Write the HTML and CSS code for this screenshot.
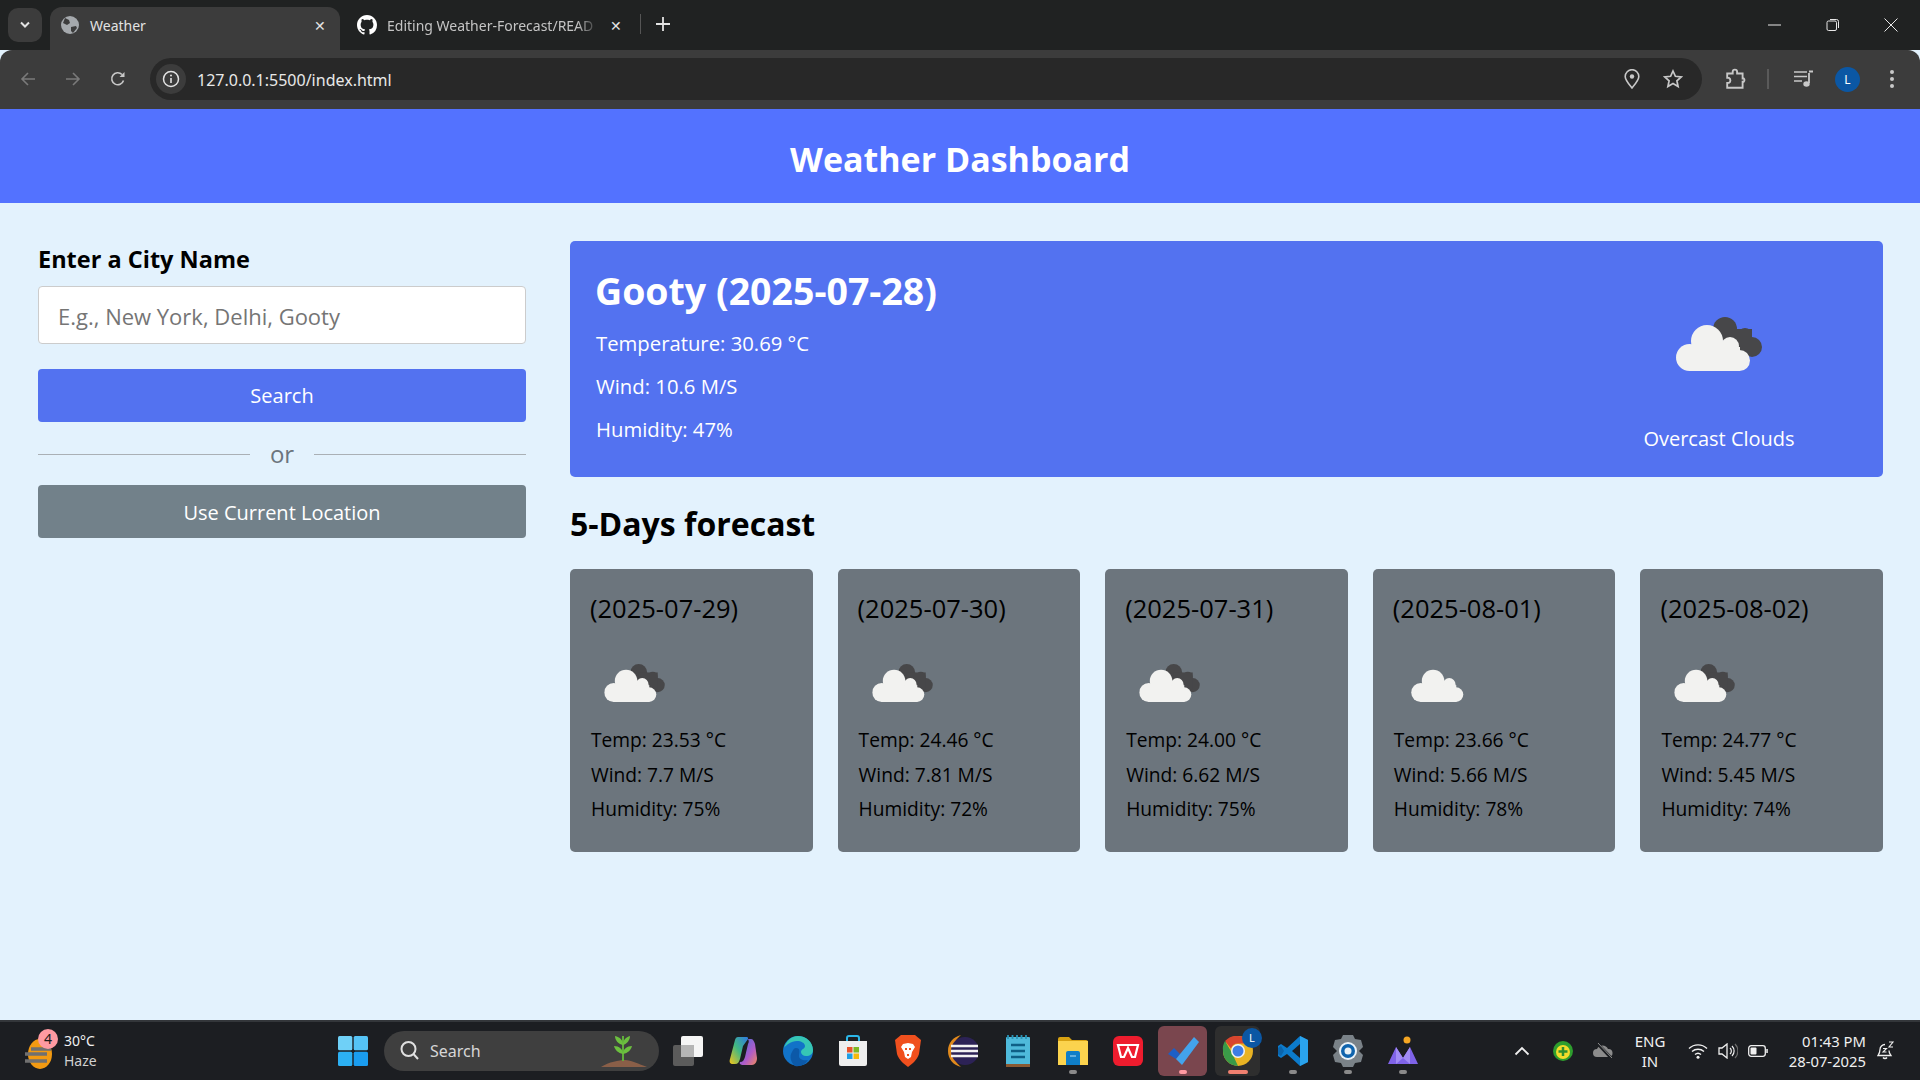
FILE: index.html
```html
<!DOCTYPE html>
<html lang="en">
  <head>
    <meta name="viewport" content="width=device-width, initial-scale=1.0">
    <title>Weather</title>
    <link rel="stylesheet" href="styles.css">
  </head>
  <body>
    <svg class="defs" width="0" height="0">
      <symbol id="cloudWhite" viewBox="0 0 86 54">
        <circle cx="31" cy="24" r="16" fill="#f2f2f0"/>
        <circle cx="54" cy="29" r="9" fill="#f2f2f0"/>
        <circle cx="13.5" cy="40.5" r="13.5" fill="#f2f2f0"/>
        <circle cx="63.5" cy="43.5" r="10.5" fill="#f2f2f0"/>
        <rect x="13" y="30" width="51" height="24" fill="#f2f2f0"/>
      </symbol>
      <symbol id="cloudDark" viewBox="0 0 86 54">
        <circle cx="49" cy="12" r="12" fill="#474749"/>
        <circle cx="69" cy="18" r="7" fill="#474749"/>
        <circle cx="76" cy="30" r="10" fill="#474749"/>
        <rect x="48" y="12" width="28" height="24" fill="#474749"/>
        <use href="#cloudWhite"/>
      </symbol>
    </svg>

    <div class="tabStrip">
      <div class="tabSearch">
        <svg width="12" height="8" viewBox="0 0 12 8"><path d="M2 1.5l4 4 4-4" fill="none" stroke="#e3e3e3" stroke-width="2"/></svg>
      </div>
      <div class="tab tabActive">
        <svg class="favicon" width="18" height="18" viewBox="0 0 18 18"><circle cx="9" cy="9" r="9" fill="#a5a9ad"/><path d="M4 2l4 2 1 3-3 2-4-2zM10 11l5-1 1 2-4 5-2-2z" fill="#3c3c3c"/></svg>
        <span class="tabTitle">Weather</span>
        <span class="tabClose">✕</span>
      </div>
      <div class="tab tabOther">
        <svg class="favicon" width="20" height="20" viewBox="0 0 16 16"><path fill="#fff" d="M8 0C3.58 0 0 3.58 0 8c0 3.54 2.29 6.53 5.47 7.59.4.07.55-.17.55-.38 0-.19-.01-.82-.01-1.49-2.01.37-2.53-.49-2.69-.94-.09-.23-.48-.94-.82-1.13-.28-.15-.68-.52-.01-.53.63-.01 1.08.58 1.23.82.72 1.21 1.87.87 2.33.66.07-.52.28-.87.51-1.07-1.78-.2-3.64-.89-3.64-3.95 0-.87.31-1.59.82-2.15-.08-.2-.36-1.02.08-2.12 0 0 .67-.21 2.2.82.64-.18 1.32-.27 2-.27s1.36.09 2 .27c1.53-1.04 2.2-.82 2.2-.82.44 1.1.16 1.92.08 2.12.51.56.82 1.27.82 2.15 0 3.07-1.87 3.75-3.65 3.95.29.25.54.73.54 1.48 0 1.07-.01 1.93-.01 2.2 0 .21.15.46.55.38A8.01 8.01 0 0 0 16 8c0-4.42-3.58-8-8-8z"/></svg>
        <span class="tabTitle tabFade">Editing Weather-Forecast/READ</span>
        <span class="tabClose">✕</span>
      </div>
      <div class="tabSep"></div>
      <div class="tabNew">
        <svg width="14" height="14" viewBox="0 0 14 14"><path d="M7 0v14M0 7h14" stroke="#e3e3e3" stroke-width="1.8"/></svg>
      </div>
      <div class="windowControls">
        <svg width="14" height="14" viewBox="0 0 14 14"><path d="M0 7h13" stroke="#e8e8e8" stroke-width="1"/></svg>
        <svg width="14" height="14" viewBox="0 0 14 14"><rect x="1" y="3" width="9.5" height="9.5" rx="1.5" fill="none" stroke="#e8e8e8"/><path d="M4 1.5h6.5a2 2 0 0 1 2 2V10" fill="none" stroke="#e8e8e8"/></svg>
        <svg width="14" height="14" viewBox="0 0 14 14"><path d="M.5.5l13 13M13.5.5l-13 13" stroke="#e8e8e8" stroke-width="1"/></svg>
      </div>
    </div>

    <div class="toolbar">
      <div class="navIcons">
        <svg width="16" height="16" viewBox="0 0 16 16"><path d="M15 8H2M8 2L2 8l6 6" fill="none" stroke="#7a7a7a" stroke-width="1.6"/></svg>
        <svg width="16" height="16" viewBox="0 0 16 16"><path d="M1 8h13M8 2l6 6-6 6" fill="none" stroke="#7a7a7a" stroke-width="1.6"/></svg>
        <svg width="16" height="16" viewBox="0 0 16 16"><path d="M13.5 9.5A6 6 0 1 1 12 3.5" fill="none" stroke="#c8c8c8" stroke-width="1.6"/><path d="M14.5 1v5h-5z" fill="#c8c8c8"/></svg>
      </div>
      <div class="omnibox">
        <div class="siteInfo">
          <svg width="18" height="18" viewBox="0 0 18 18"><circle cx="9" cy="9" r="7.5" fill="none" stroke="#e3e3e3" stroke-width="1.5"/><path d="M9 8v5" stroke="#e3e3e3" stroke-width="1.6"/><circle cx="9" cy="5.5" r="1" fill="#e3e3e3"/></svg>
        </div>
        <span class="url">127.0.0.1:5500/index.html</span>
        <svg class="pinIcon" width="16" height="20" viewBox="0 0 16 20"><path d="M8 19C4 14 1.2 11 1.2 7.5a6.8 6.8 0 0 1 13.6 0C14.8 11 12 14 8 19z" fill="none" stroke="#c8c8c8" stroke-width="1.6"/><circle cx="8" cy="7.5" r="2.2" fill="#c8c8c8"/></svg>
        <svg class="starIcon" width="20" height="20" viewBox="0 0 20 20"><path d="M10 2l2.4 5.3 5.8.6-4.3 3.9 1.2 5.7L10 14.6l-5.1 2.9 1.2-5.7L1.8 7.9l5.8-.6z" fill="none" stroke="#c8c8c8" stroke-width="1.7"/></svg>
      </div>
      <div class="toolIcons">
        <svg width="22" height="22" viewBox="0 0 20 20"><path d="M2 5h5V3.5a2 2 0 0 1 4 0V5h5v4.500h1a2 2 0 0 1 0 3h-1V18H2v-4.500h1.500a2.500 2.500 0 0 0 0-4.500H2z" fill="none" stroke="#c8c8c8" stroke-width="1.7"/></svg>
        <div class="toolSep"></div>
        <svg width="20" height="18" viewBox="0 0 20 18"><path d="M0 2h13M0 6.5h13M0 11h8" stroke="#c8c8c8" stroke-width="1.7"/><path d="M15 3v10" stroke="#c8c8c8" stroke-width="1.8"/><path d="M15 1.5h4" stroke="#c8c8c8" stroke-width="2"/><ellipse cx="12.5" cy="14" rx="3.2" ry="2.8" fill="#c8c8c8"/></svg>
        <div class="avatar">L</div>
        <svg width="6" height="20" viewBox="0 0 6 20"><circle cx="3" cy="3" r="2" fill="#c8c8c8"/><circle cx="3" cy="10" r="2" fill="#c8c8c8"/><circle cx="3" cy="17" r="2" fill="#c8c8c8"/></svg>
      </div>
    </div>

    <div class="page">
      <header class="pageHeader">
        <h1>Weather Dashboard</h1>
      </header>
      <main class="content">
        <section class="sidebar">
          <h3 class="cityLabel">Enter a City Name</h3>
          <input class="cityInput" type="text" placeholder="E.g., New York, Delhi, Gooty">
          <button class="btn btnSearch">Search</button>
          <div class="divider"><span>or</span></div>
          <button class="btn btnLocation">Use Current Location</button>
        </section>
        <section class="results">
          <div class="currentCard">
            <div class="currentInfo">
              <h2>Gooty (2025-07-28)</h2>
              <p>Temperature: 30.69 °C</p>
              <p>Wind: 10.6 M/S</p>
              <p>Humidity: 47%</p>
            </div>
            <div class="currentIcon">
              <svg width="86" height="54"><use href="#cloudDark"/></svg>
              <p>Overcast Clouds</p>
            </div>
          </div>
          <h2 class="forecastTitle">5-Days forecast</h2>
          <div class="forecastGrid">
            <div class="dayCard">
              <h3>(2025-07-29)</h3>
              <svg class="dayIcon" width="61" height="38"><use href="#cloudDark"/></svg>
              <p>Temp: 23.53 °C</p>
              <p>Wind: 7.7 M/S</p>
              <p>Humidity: 75%</p>
            </div>
            <div class="dayCard">
              <h3>(2025-07-30)</h3>
              <svg class="dayIcon" width="61" height="38"><use href="#cloudDark"/></svg>
              <p>Temp: 24.46 °C</p>
              <p>Wind: 7.81 M/S</p>
              <p>Humidity: 72%</p>
            </div>
            <div class="dayCard">
              <h3>(2025-07-31)</h3>
              <svg class="dayIcon" width="61" height="38"><use href="#cloudDark"/></svg>
              <p>Temp: 24.00 °C</p>
              <p>Wind: 6.62 M/S</p>
              <p>Humidity: 75%</p>
            </div>
            <div class="dayCard">
              <h3>(2025-08-01)</h3>
              <svg class="dayIcon dayIconClear" width="61" height="38"><use href="#cloudWhite"/></svg>
              <p>Temp: 23.66 °C</p>
              <p>Wind: 5.66 M/S</p>
              <p>Humidity: 78%</p>
            </div>
            <div class="dayCard">
              <h3>(2025-08-02)</h3>
              <svg class="dayIcon" width="61" height="38"><use href="#cloudDark"/></svg>
              <p>Temp: 24.77 °C</p>
              <p>Wind: 5.45 M/S</p>
              <p>Humidity: 74%</p>
            </div>
          </div>
        </section>
      </main>
    </div>

    <footer class="taskbar">
      <div class="widget">
        <div class="widgetIcon">
          <svg width="32" height="34" viewBox="0 0 32 34">
            <ellipse cx="17" cy="18" rx="12" ry="15" fill="#f29a12"/>
            <path d="M2 18h22M8 13h20M2 25h22" stroke="#707070" stroke-width="3.5"/>
          </svg>
          <span class="widgetBadge">4</span>
        </div>
        <div class="widgetText">
          <span>30°C</span>
          <span class="widgetSub">Haze</span>
        </div>
      </div>

      <div class="taskCell">
        <svg width="30" height="30" viewBox="0 0 30 30">
          <rect width="14.3" height="14.3" rx="1.5" fill="#6fd0f7"/>
          <rect x="15.7" width="14.3" height="14.3" rx="1.5" fill="#55c3f5"/>
          <rect y="15.7" width="14.3" height="14.3" rx="1.5" fill="#2cb0f3"/>
          <rect x="15.7" y="15.7" width="14.3" height="14.3" rx="1.5" fill="#1a9df0"/>
        </svg>
      </div>
      <div class="taskSearch">
        <svg width="20" height="22" viewBox="0 0 20 22"><circle cx="8.5" cy="9" r="7" fill="none" stroke="#e0e0e0" stroke-width="2"/><path d="M13.5 14l4.5 5" stroke="#e0e0e0" stroke-width="2"/></svg>
        <span>Search</span>
        <svg class="plant" width="46" height="36" viewBox="0 0 46 36">
          <path d="M0 34c8-5 18-7 24-7s14 4 22 7z" fill="#8a5f48"/>
          <path d="M22 28V3" stroke="#5fae3a" stroke-width="2"/>
          <path d="M22 12C17 11 14 7 14 3c5 1 8 4 8 9zM22 12c4-1 7-5 7-9-4 1-7 4-7 9zM22 21c-5-1-8-4-9-8 5 0 9 3 9 8zM22 21c5-1 8-4 9-8-5 0-9 3-9 8z" fill="#6cbf3f"/>
        </svg>
      </div>

      <div class="taskCell">
        <svg width="30" height="30" viewBox="0 0 30 30"><rect y="9" width="21" height="21" rx="2" fill="#5b5b5b"/><rect x="8" width="22" height="21" rx="2" fill="#f5f5f5"/><rect x="8" y="9" width="13" height="12" fill="#b5b5b5"/></svg>
      </div>
      <div class="taskCell">
        <svg width="30" height="30" viewBox="0 0 30 30"><defs><linearGradient id="copilotA" x1="0" y1="1" x2="1" y2="0"><stop offset="0" stop-color="#f5c518"/><stop offset=".5" stop-color="#41b883"/><stop offset="1" stop-color="#2f7ae5"/></linearGradient><linearGradient id="copilotB" x1="0" y1="0" x2="1" y2="1"><stop offset="0" stop-color="#3d6fe0"/><stop offset=".6" stop-color="#b05cc8"/><stop offset="1" stop-color="#f08a5d"/></linearGradient></defs><path d="M10 1h9c1 0 1 1 1 2l-5 7-3 13c-1 3-2 5-5 5H5C2 28 1 26 2 23L7 4c.5-2 1.5-3 3-3z" fill="url(#copilotA)"/><path d="M20 3h3c2 0 3 2 4 5l2 14c0 4-2 7-5 7H15c-2 0-4-1-3-3 3 0 4-2 5-5l3-13c1-2 1-3 0-5z" fill="url(#copilotB)"/></svg>
      </div>
      <div class="taskCell">
        <svg width="30" height="32" viewBox="0 0 30 32"><circle cx="15" cy="16" r="15" fill="#1273c8"/><path d="M15 1c8 0 15 6 15 14 0 4-3 6-7 6-3 0-5-2-5-4 0-3 4-3 4-6 0-3-4-5-8-5C8 6 3 10 1 13 3 6 8 1 15 1z" fill="#36c6b5"/><path d="M13 13c5 0 3 5 3 8 0 3 4 5 9 4-3 5-8 7-13 6 -4-3-6-10-3-14 1-2 2-4 4-4z" fill="#0c59a8"/></svg>
      </div>
      <div class="taskCell">
        <svg width="30" height="32" viewBox="0 0 30 32"><path d="M9 8V3a2 2 0 0 1 2-2h8a2 2 0 0 1 2 2v5" fill="none" stroke="#2bb6e8" stroke-width="2"/><path d="M1 6h28v23a2 2 0 0 1-2 2H3a2 2 0 0 1-2-2z" fill="#eeeeee"/><rect x="9" y="12" width="5.5" height="5.5" fill="#e8532b"/><rect x="15.5" y="12" width="5.5" height="5.5" fill="#7db824"/><rect x="9" y="18.5" width="5.5" height="5.5" fill="#1f9fe6"/><rect x="15.5" y="18.5" width="5.5" height="5.5" fill="#f5b90d"/></svg>
      </div>
      <div class="taskCell">
        <svg width="26" height="32" viewBox="0 0 26 32"><path d="M6 0h14l6 5-2 14c-2 6-7 10-11 13C9 29 4 25 2 19L0 5z" fill="#f0501e"/><path d="M8 9l5-1 5 1 2 3-3 5-1 5-3 2-3-2-1-5-3-5z" fill="#fff"/><path d="M10 13h2v2h-2zM14 13h2v2h-2zM12 19h2v2h-2z" fill="#f0501e"/></svg>
      </div>
      <div class="taskCell">
        <svg width="30" height="32" viewBox="0 0 30 32"><path d="M13 0C5 2 0 8 0 16s5 14 13 16C7 27 5 22 5 16S7 5 13 0z" fill="#e18a1d"/><circle cx="17" cy="16" r="14" fill="#2c2256"/><path d="M3 11h28M3 16h28M3 21h28" stroke="#f2f2f2" stroke-width="2.5"/></svg>
      </div>
      <div class="taskCell">
        <svg width="24" height="32" viewBox="0 0 24 32"><rect y="2" width="24" height="28" rx="1" fill="#4fbadb"/><path d="M2 0v4M6.5 0v4M11 0v4M15.5 0v4M20 0v4" stroke="#2a93b5" stroke-width="1.8"/><path d="M5 10h14M5 16h14M5 22h14" stroke="#0f5f86" stroke-width="2.4"/><rect y="29" width="24" height="3" fill="#8a5a32"/></svg>
      </div>
      <div class="taskCell">
        <svg width="30" height="28" viewBox="0 0 30 28"><path d="M0 2a2 2 0 0 1 2-2h9l3 3h14a2 2 0 0 1 2 2v4H0z" fill="#d8a212"/><path d="M0 4h30v24H0z" fill="#fbd34e"/><path d="M8 16a2 2 0 0 1 2-2h10a2 2 0 0 1 2 2v12H8z" fill="#0f7ec8"/><path d="M12 19h6" stroke="#b8e0f5" stroke-width="1"/></svg>
        <span class="runDot"></span>
      </div>
      <div class="taskCell">
        <svg width="30" height="30" viewBox="0 0 30 30"><rect width="30" height="30" rx="6" fill="#ee1c2e"/><path d="M5 9h20l-3 12h-3l-4-9-4 9H8z" fill="none" stroke="#fff" stroke-width="2.2"/></svg>
      </div>
      <div class="taskCell taskHighlight">
        <svg width="32" height="28" viewBox="0 0 32 28"><path d="M1 17l6-6 6 6-4 5z" fill="#1c5fc6"/><path d="M9 22L27 0l5 5-17 23z" fill="#43a3ec"/></svg>
        <span class="runDot runPink"></span>
      </div>
      <div class="taskCell taskOpen">
        <svg width="32" height="32" viewBox="0 0 32 32"><circle cx="16" cy="16" r="15" fill="#e9b323"/><path d="M16 1a15 15 0 0 1 13 7.5H16a7.5 7.5 0 0 0-7 5L3 6a15 15 0 0 1 13-5z" fill="#d8452e"/><path d="M1 16A15 15 0 0 1 3 6l7 12 6 13A15 15 0 0 1 1 16z" fill="#3a9a48"/><circle cx="16" cy="16" r="7" fill="#f3f3f3"/><circle cx="16" cy="16" r="5.5" fill="#3d7de6"/></svg>
        <span class="chromeBadge">L</span>
        <span class="runDot runWide"></span>
      </div>
      <div class="taskCell">
        <svg width="30" height="30" viewBox="0 0 30 30"><path d="M22 0l8 4v22l-8 4-13-12-6 4-3-2v-10l3-2 6 4z" fill="#0c7bcc"/><path d="M22 8l-8 7 8 7z" fill="#1c1e22"/><path d="M22 0l8 4v22l-8 4z" fill="#2aa3ed"/><path d="M3 10l3 5-3 5-3-2v-6z" fill="#0b64ab"/></svg>
        <span class="runDot"></span>
      </div>
      <div class="taskCell">
        <svg width="30" height="32" viewBox="0 0 30 32"><path d="M10 0h10l2 4 6 1 2 7-4 4 4 4-2 7-6 1-2 4H10l-2-4-6-1-2-7 4-4-4-4 2-7 6-1z" fill="#7a8288"/><circle cx="15" cy="16" r="9" fill="#eaf2f8"/><circle cx="15" cy="16" r="7" fill="#1064ad"/><circle cx="15" cy="16" r="3.5" fill="#e8f0f5"/></svg>
        <span class="runDot"></span>
      </div>
      <div class="taskCell">
        <svg width="30" height="30" viewBox="0 0 30 30"><circle cx="19" cy="4" r="3.5" fill="#f5a623"/><path d="M0 28L8 11l7 11 7-11 8 17z" fill="#7f63e8"/><path d="M8 11l7 11-7 6zM22 11l-7 11 7 6z" fill="#a18cf5"/></svg>
        <span class="runDot"></span>
      </div>

      <div class="tray">
        <svg class="trayChevron" width="16" height="10" viewBox="0 0 16 10"><path d="M1.5 8.5L8 2l6.5 6.5" fill="none" stroke="#f0f0f0" stroke-width="1.8"/></svg>
        <svg class="trayGreen" width="20" height="20" viewBox="0 0 20 20"><circle cx="10" cy="10" r="10" fill="#2e9e2e"/><circle cx="10" cy="11" r="7" fill="#f2dc2b"/><path d="M10 6v9M5.5 10.5h9" stroke="#2e8e2e" stroke-width="2.5"/></svg>
        <svg class="trayCloud" width="20" height="16" viewBox="0 0 20 16"><path d="M4 14a4 4 0 0 1 0-8 6 6 0 0 1 11 0 4 4 0 0 1 1 8z" fill="#8c8c8c"/><path d="M4 0l15 16" stroke="#1c1e22" stroke-width="3"/><path d="M5 0l14 15" stroke="#8c8c8c" stroke-width="1"/></svg>
        <div class="trayLang"><span>ENG</span><span>IN</span></div>
        <svg class="trayWifi" width="20" height="16" viewBox="0 0 20 16"><path d="M1 5.5a13 13 0 0 1 18 0M4 8.5a9 9 0 0 1 12 0M7 11.5a4.5 4.5 0 0 1 6 0" fill="none" stroke="#f0f0f0" stroke-width="1.4"/><circle cx="10" cy="14.2" r="1.5" fill="#f0f0f0"/></svg>
        <svg class="traySound" width="20" height="16" viewBox="0 0 20 16"><path d="M1 5h3l5-4v14l-5-4H1z" fill="none" stroke="#f0f0f0" stroke-width="1.3"/><path d="M12 5a4 4 0 0 1 0 6M14 3a7 7 0 0 1 0 10" fill="none" stroke="#f0f0f0" stroke-width="1.2"/><path d="M17 1a10 10 0 0 1 0 14" fill="none" stroke="#6c6c6c" stroke-width="1.2"/></svg>
        <svg class="trayBattery" width="20" height="12" viewBox="0 0 20 12"><rect x=".7" y=".7" width="16.6" height="10.6" rx="2.5" fill="none" stroke="#f0f0f0" stroke-width="1.3"/><rect x="2.5" y="2.5" width="6" height="7" rx="1" fill="#f0f0f0"/><rect x="18.3" y="4" width="1.5" height="4" fill="#f0f0f0"/></svg>
        <div class="trayClock"><span>01:43 PM</span><span>28-07-2025</span></div>
        <svg class="trayBell" width="18" height="20" viewBox="0 0 18 20"><path d="M8 3.5a5 5 0 0 0-5 5c0 3-1 4.5-2 6h13c-1-1.500-2-2.500-2-5" fill="none" stroke="#f0f0f0" stroke-width="1.3"/><path d="M6 16.5a2.5 2.5 0 0 0 4 0" fill="none" stroke="#f0f0f0" stroke-width="1.3"/><path d="M6 7.5h3.5L6 11h3.5M12 1h4l-4 5h4" fill="none" stroke="#f0f0f0" stroke-width="1.1"/></svg>
      </div>
    </footer>
  </body>
</html>
```

FILE: styles.css
```css
*{
  box-sizing: border-box;
}
html, body{
  margin: 0;
  height: 1080px;
  overflow: hidden;
}
body{
  display: flex;
  flex-direction: column;
  font-family: "Open Sans", sans-serif;
  background-color: #e3f2fd;
}
.defs{
  position: absolute;
}

/* browser tabs */
.tabStrip{
  display: flex;
  align-items: flex-end;
  height: 50px;
  background-color: #202222;
  font-family: "Noto Sans", sans-serif;
  color: #e3e3e3;
  font-size: 14px;
  flex-shrink: 0;
}
.tabSearch{
  display: flex;
  justify-content: center;
  align-items: center;
  width: 34px;
  height: 34px;
  margin: 0 8px 8px 8px;
  background-color: #3c3c3c;
  border-radius: 10px;
}
.tab{
  display: flex;
  align-items: center;
  width: 296px;
  height: 43px;
  padding: 0 14px 7px 15px;
  border-radius: 12px 12px 0 0;
}
.tabActive{
  width: 290px;
  background-color: #3c3c3c;
  padding-left: 11px;
}
.tabOther{
  padding-left: 17px;
}
.tabOther .favicon{
  margin-right: 10px;
}
.favicon{
  flex-shrink: 0;
  margin-right: 11px;
}
.tabTitle{
  flex: 1;
  white-space: nowrap;
}
.tabFade{
  color: #c4c4c4;
  mask-image: linear-gradient(to right, #000 190px, transparent 212px);
}
.tabClose{
  font-size: 14px;
  margin-left: 12px;
}
.tabSep{
  width: 1px;
  height: 20px;
  margin: 0 0 16px 4px;
  background-color: #555;
}
.tabNew{
  display: flex;
  width: 14px;
  margin: 0 0 19px 15px;
}
.windowControls{
  display: flex;
  align-items: center;
  gap: 44px;
  margin-left: auto;
  margin-right: 22px;
  margin-bottom: 18px;
}

/* browser toolbar */
.toolbar{
  display: flex;
  align-items: center;
  height: 59px;
  padding-bottom: 1px;
  background-color: #3c3c3c;
  border-radius: 12px 12px 0 0;
  flex-shrink: 0;
}
.navIcons{
  display: flex;
  align-items: center;
  gap: 29px;
  width: 150px;
  padding-left: 20px;
}
.omnibox{
  display: flex;
  align-items: center;
  width: 1552px;
  height: 42px;
  background-color: #282828;
  border-radius: 21px;
  padding-left: 6px;
  font-family: "Noto Sans", sans-serif;
  color: #e8e8e8;
}
.siteInfo{
  display: flex;
  justify-content: center;
  align-items: center;
  width: 30px;
  height: 30px;
  border-radius: 50%;
  background-color: #3c3c3c;
}
.url{
  flex: 1;
  margin-left: 11px;
  padding-top: 2px;
  font-size: 16px;
}
.pinIcon{
  margin-right: 23px;
}
.starIcon{
  margin-right: 19px;
}
.toolIcons{
  display: flex;
  align-items: center;
  flex: 1;
  padding-left: 23px;
}
.toolSep{
  width: 2px;
  height: 20px;
  margin: 0 25px 0 20px;
  background-color: #5a5a5a;
}
.avatar{
  display: flex;
  justify-content: center;
  align-items: center;
  width: 25px;
  height: 25px;
  margin: 0 29px 0 21px;
  border-radius: 50%;
  background-color: #0b57a4;
  color: #fff;
  font-family: "Noto Sans", sans-serif;
  font-size: 12px;
}

/* weather page */
.page{
  flex: 1;
  display: flex;
  flex-direction: column;
  background-color: #e3f2fd;
}
.pageHeader{
  display: flex;
  justify-content: center;
  align-items: center;
  height: 94px;
  padding-top: 5px;
  background-color: #5372ff;
}
.pageHeader h1{
  margin: 0;
  color: #fff;
  font-size: 34px;
  font-weight: 700;
}
.content{
  display: flex;
  gap: 44px;
  padding: 38px 37px 0 38px;
}
.sidebar{
  display: flex;
  flex-direction: column;
  width: 488px;
  flex-shrink: 0;
}
.cityLabel{
  margin: 2px 0 11px 0;
  font-size: 23.5px;
  line-height: 32px;
  font-weight: 700;
  color: #000;
}
.cityInput{
  width: 100%;
  height: 58px;
  padding: 2px 19px 0 19px;
  background-color: #fff;
  border: 1px solid #ccc;
  border-radius: 4px;
  font-family: inherit;
  font-size: 22px;
}
.cityInput::placeholder{
  color: #757575;
}
.btn{
  width: 100%;
  height: 53px;
  border: none;
  border-radius: 4px;
  color: #fff;
  font-family: inherit;
  font-size: 20px;
}
.btnSearch{
  margin-top: 25px;
  background-color: #5372f0;
}
.btnLocation{
  padding-top: 2px;
  background-color: #72818a;
}
.divider{
  display: flex;
  align-items: center;
  gap: 20px;
  height: 63px;
  color: #6c757d;
  font-size: 24px;
}
.divider::before, .divider::after{
  content: "";
  flex: 1;
  height: 1px;
  background-color: #aab0b5;
  margin-top: 2px;
}
.results{
  flex: 1;
  min-width: 0;
}
.currentCard{
  display: flex;
  justify-content: space-between;
  height: 236px;
  padding: 26px 88px 0 25px;
  background-color: #5372f0;
  border-radius: 5px;
  color: #fff;
}
.currentInfo h2{
  margin: 0 0 15px 0;
  font-size: 37.5px;
  line-height: 48px;
  font-weight: 700;
}
.currentInfo p{
  margin: 0 0 17px 1px;
  font-size: 20.3px;
  line-height: 26px;
}
.currentIcon{
  display: flex;
  flex-direction: column;
  align-items: center;
  width: 152px;
  padding-top: 50px;
}
.currentIcon p{
  margin: 55px 0 0 0;
  font-size: 20px;
  line-height: 26px;
  white-space: nowrap;
}
.forecastTitle{
  margin: 26px 0 24px 0;
  font-size: 32px;
  line-height: 42px;
  font-weight: 700;
  color: #000;
}
.forecastGrid{
  display: grid;
  grid-template-columns: repeat(5, 1fr);
  gap: 25px;
}
.dayCard{
  height: 283px;
  padding: 24px 20px 0 20px;
  background-color: #6c757d;
  border-radius: 5px;
  color: #000;
}
.dayCard h3{
  margin: 0 0 41px 0;
  font-size: 25.5px;
  line-height: 30px;
  font-weight: 500;
}
.dayIcon{
  display: block;
  margin: 0 0 25px 14px;
}
.dayIconClear{
  margin-left: 18px;
}
.dayCard p{
  margin: 0 0 8px 1px;
  font-size: 19.2px;
  line-height: 26.5px;
}

/* windows taskbar */
.taskbar{
  display: flex;
  align-items: center;
  height: 60px;
  flex-shrink: 0;
  background-color: #1c1e22;
  border-top: 2px solid #33363a;
  color: #f0f0f0;
  font-family: "Noto Sans", sans-serif;
}
.widget{
  display: flex;
  align-items: center;
  width: 325px;
  padding-left: 23px;
  flex-shrink: 0;
}
.widgetIcon{
  position: relative;
  width: 41px;
  height: 34px;
  margin-top: 4px;
}
.widgetBadge{
  position: absolute;
  top: -7px;
  left: 15px;
  width: 20px;
  height: 20px;
  border-radius: 50%;
  background-color: #ff9aa2;
  color: #1a1a1a;
  font-size: 14px;
  line-height: 20px;
  text-align: center;
}
.widgetText{
  display: flex;
  flex-direction: column;
  font-size: 14px;
  line-height: 20px;
}
.widgetSub{
  color: #d0d0d0;
}
.taskCell{
  position: relative;
  display: flex;
  justify-content: center;
  align-items: center;
  width: 55px;
  height: 50px;
  flex-shrink: 0;
}
.taskCell svg{
  position: relative;
}
.taskHighlight::before, .taskOpen::before{
  content: "";
  position: absolute;
  top: 0;
  bottom: 0;
  border-radius: 6px;
}
.taskHighlight::before{
  left: 3px;
  right: 3px;
  background-color: #7a464e;
}
.taskOpen::before{
  left: 5px;
  right: 5px;
  background-color: #2e2e2e;
}
.taskSearch{
  display: flex;
  align-items: center;
  width: 275px;
  height: 40px;
  margin: 0 1px 0 4px;
  padding: 0 16px;
  background-color: #3f3f3f;
  border-radius: 20px;
  font-size: 16px;
  color: #d6d6d6;
  flex-shrink: 0;
}
.taskSearch span{
  flex: 1;
  margin-left: 10px;
}
.plant{
  margin-right: -4px;
}
.runDot{
  position: absolute;
  bottom: 2px;
  left: 50%;
  width: 8px;
  height: 4px;
  margin-left: -4px;
  border-radius: 2px;
  background-color: #8a8a8a;
}
.runPink{
  background-color: #ff9aa2;
}
.runWide{
  width: 20px;
  margin-left: -10px;
  background-color: #f08070;
}
.chromeBadge{
  position: absolute;
  top: 2px;
  right: 3px;
  width: 20px;
  height: 20px;
  border-radius: 50%;
  background-color: #0b57a4;
  color: #fff;
  font-size: 11px;
  line-height: 20px;
  text-align: center;
}
.tray{
  display: flex;
  align-items: center;
  margin-left: auto;
  padding-right: 25px;
}
.trayGreen{
  margin-left: 23px;
}
.trayCloud{
  margin-left: 20px;
}
.trayLang{
  display: flex;
  flex-direction: column;
  align-items: center;
  width: 36px;
  margin-left: 19px;
  font-size: 15px;
  line-height: 20px;
}
.trayWifi{
  margin-left: 20px;
}
.traySound{
  margin-left: 10px;
}
.trayBattery{
  margin-left: 10px;
}
.trayClock{
  display: flex;
  flex-direction: column;
  align-items: flex-end;
  width: 98px;
  font-size: 14.8px;
  line-height: 20px;
}
.trayBell{
  margin-left: 11px;
}
```
